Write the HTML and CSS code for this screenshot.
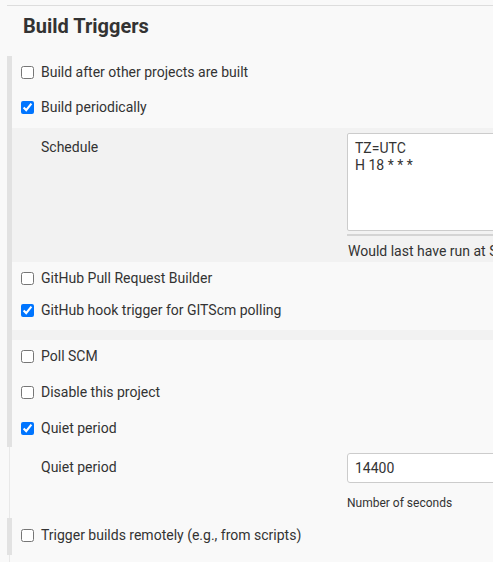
FILE: index.html
```html
<!DOCTYPE html>
<html>
<head>
<meta charset="utf-8">
<link rel="stylesheet" href="styles.css">
</head>
<body>
<div class="page">
  <div class="topline"></div>
  <h2 class="title">Build Triggers</h2>
  <div class="section">
    <div class="group thick">
      <label class="row r1"><input type="checkbox"><span>Build after other projects are built</span></label>
      <label class="row r2"><input type="checkbox" checked><span>Build periodically</span></label>
      <div class="nested schedule">
        <div class="field-label">Schedule</div>
        <div class="field">
          <textarea class="ta">TZ=UTC
H 18 * * *</textarea>
          <div class="resize"></div>
          <div class="note">Would last have run at Saturday, 1 January 2022, 18:00:00 Coordinated Universal Time</div>
        </div>
      </div>
      <label class="row r3"><input type="checkbox"><span>GitHub Pull Request Builder</span></label>
      <label class="row r4"><input type="checkbox" checked><span>GitHub hook trigger for GITScm polling</span></label>
      <div class="band"></div>
      <label class="row r5"><input type="checkbox"><span>Poll SCM</span></label>
      <label class="row r6"><input type="checkbox"><span>Disable this project</span></label>
      <label class="row r7"><input type="checkbox" checked><span>Quiet period</span></label>
    </div>
    <div class="group thin quiet">
      <div class="field-label ql">Quiet period</div>
      <div class="field">
        <input class="txt" type="text" value="14400">
        <div class="help">Number of seconds</div>
      </div>
    </div>
    <div class="group thick last">
      <label class="row r8"><input type="checkbox"><span>Trigger builds remotely (e.g., from scripts)</span></label>
    </div>
    <div class="group thin tail"></div>
  </div>
</div>
</body>
</html>
```

FILE: styles.css
```css
html, body {
  margin: 0;
  padding: 0;
  overflow: hidden;
  background: #f9f9f9;
}
body {
  font-family: Roboto, "Liberation Sans", sans-serif;
  color: #333;
  width: 493px;
  height: 562px;
}
.page {
  padding-top: 5px;
  height: 557px;
  overflow: hidden;
}
.topline {
  margin-left: 7px;
  border-top: 1px solid #dddddd;
}
.title {
  margin: 8px 0 0 23px;
  font-size: 20px;
  line-height: 24px;
  font-weight: 700;
  color: #333;
}
.section {
  margin-top: 18px;
  margin-left: 7px;
}
.group.thick {
  border-left: 5px solid #e2e2e2;
}
.group.thin {
  padding-left: 5px;
  background: linear-gradient(to right, transparent 2px, #e8e8e8 2px, #e8e8e8 3px, transparent 3px) no-repeat;
}
.group.thick:first-child {
  padding-top: 6px;
  padding-bottom: 9px;
}
.row {
  display: flex;
  align-items: center;
  height: 20px;
  padding-left: 9px;
  font-size: 14px;
  white-space: nowrap;
}
.row input {
  margin: 0 7px 0 0;
  width: 13px;
  height: 13px;
}
.r2 { margin-top: 15px; }
.r3 { margin-top: 6px; }
.r4 { margin-top: 12px; }
.r5 { margin-top: 6px; }
.r6 { margin-top: 16px; }
.r7 { margin-top: 16px; }
.nested {
  display: flex;
  margin-top: 11px;
  background: #f2f2f2;
}
.schedule {
  height: 134px;
  padding-top: 5px;
  box-sizing: border-box;
}
.band {
  margin-top: 10px;
  height: 10px;
  background: #f2f2f2;
}
.field-label {
  width: 306px;
  padding-left: 29px;
  font-size: 14px;
  line-height: 18px;
  padding-top: 5px;
  flex: none;
}
.field {
  flex: none;
  width: 146px;
  overflow: hidden;
}
.ta {
  display: block;
  box-sizing: border-box;
  width: 320px;
  height: 98px;
  margin: 0;
  padding: 6px 7px;
  border: 1px solid #cccccc;
  border-radius: 2px;
  background: #fff;
  font-family: Roboto, "Liberation Sans", sans-serif;
  font-size: 14px;
  line-height: 17px;
  color: #333;
  resize: none;
  overflow: hidden;
}
.resize {
  margin-top: 3px;
  height: 2px;
  background: #d4d4d4;
}
.note {
  margin-top: 6px;
  margin-left: 1px;
  font-size: 14px;
  line-height: 18px;
  white-space: nowrap;
}
.quiet {
  display: flex;
  height: 71px;
  padding-top: 6px;
  box-sizing: border-box;
}
.ql {
  padding-top: 5px;
}
.txt {
  display: block;
  box-sizing: border-box;
  width: 320px;
  height: 30px;
  margin: 0;
  padding: 0 7px;
  border: 1px solid #cccccc;
  border-radius: 3px;
  background: #fff;
  font-family: Roboto, "Liberation Sans", sans-serif;
  font-size: 14px;
  color: #333;
}
.help {
  margin-top: 12px;
  font-size: 12px;
  line-height: 16px;
  white-space: nowrap;
}
.group.last {
  padding-top: 7px;
  padding-bottom: 10px;
}
.tail {
  height: 7px;
}
```
